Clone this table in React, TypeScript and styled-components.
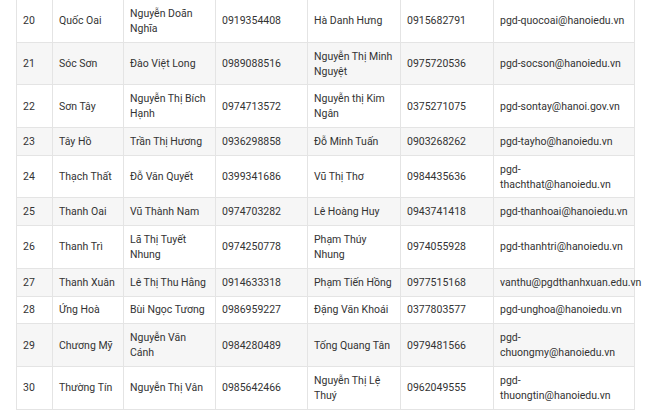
import React from "react";
import styled, { createGlobalStyle } from "styled-components";

const GlobalStyle = createGlobalStyle`
  html, body {
    margin: 0;
    padding: 0;
    background: #ffffff;
  }
  body {
    font-family: Roboto, "Noto Sans", "Liberation Sans", sans-serif;
  }
`;

const Page = styled.div`
  padding: 0 11px 0 16px;
  margin-top: -1px;
`;

const Table = styled.table`
  width: 618px;
  border-collapse: collapse;
  table-layout: fixed;
  font-size: 10.5px;
  line-height: 15px;
  color: #333333;
`;

const Row = styled.tr<{ $striped: boolean }>`
  background: ${(p) => (p.$striped ? "#f6f6f6" : "#ffffff")};
`;

const Cell = styled.td`
  border: 1px solid #e4e4e4;
  padding: 5.85px 6px;
  vertical-align: middle;
  text-align: left;
`;

const widths = [36, 71, 92, 92, 93, 93, 141];

type Entry = [string, string, string, string, string, string, string];

const rows: Entry[] = [
  ["20", "Quốc Oai", "Nguyễn Doãn Nghĩa", "0919354408", "Hà Danh Hưng", "0915682791", "pgd-quocoai@hanoiedu.vn"],
  ["21", "Sóc Sơn", "Đào Việt Long", "0989088516", "Nguyễn Thị Minh Nguyệt", "0975720536", "pgd-socson@hanoiedu.vn"],
  ["22", "Sơn Tây", "Nguyễn Thị Bích Hạnh", "0974713572", "Nguyễn thị Kim Ngân", "0375271075", "pgd-sontay@hanoi.gov.vn"],
  ["23", "Tây Hồ", "Trần Thị Hương", "0936298858", "Đỗ Minh Tuấn", "0903268262", "pgd-tayho@hanoiedu.vn"],
  ["24", "Thạch Thất", "Đỗ Văn Quyết", "0399341686", "Vũ Thị Thơ", "0984435636", "pgd-thachthat@hanoiedu.vn"],
  ["25", "Thanh Oai", "Vũ Thành Nam", "0974703282", "Lê Hoàng Huy", "0943741418", "pgd-thanhoai@hanoiedu.vn"],
  ["26", "Thanh Trì", "Lã Thị Tuyết Nhung", "0974250778", "Phạm Thúy Nhung", "0974055928", "pgd-thanhtri@hanoiedu.vn"],
  ["27", "Thanh Xuân", "Lê Thị Thu Hằng", "0914633318", "Phạm Tiến Hồng", "0977515168", "vanthu@pgdthanhxuan.edu.vn"],
  ["28", "Ứng Hoà", "Bùi Ngọc Tương", "0986959227", "Đặng Văn Khoái", "0377803577", "pgd-unghoa@hanoiedu.vn"],
  ["29", "Chương Mỹ", "Nguyễn Văn Cánh", "0984280489", "Tống Quang Tân", "0979481566", "pgd-chuongmy@hanoiedu.vn"],
  ["30", "Thường Tín", "Nguyễn Thị Vân", "0985642466", "Nguyễn Thị Lệ Thuý", "0962049555", "pgd-thuongtin@hanoiedu.vn"],
];

const App = () => {
  return (
    <>
      <GlobalStyle />
      <Page>
        <Table>
          <colgroup>
            {widths.map((w, i) => (
              <col key={i} style={{ width: w }} />
            ))}
          </colgroup>
          <tbody>
            {rows.map((r, i) => (
              <Row key={r[0]} $striped={i % 2 === 1}>
                {r.map((c, j) => (
                  <Cell key={j}>{c}</Cell>
                ))}
              </Row>
            ))}
          </tbody>
        </Table>
      </Page>
    </>
  );
};

export default App;
